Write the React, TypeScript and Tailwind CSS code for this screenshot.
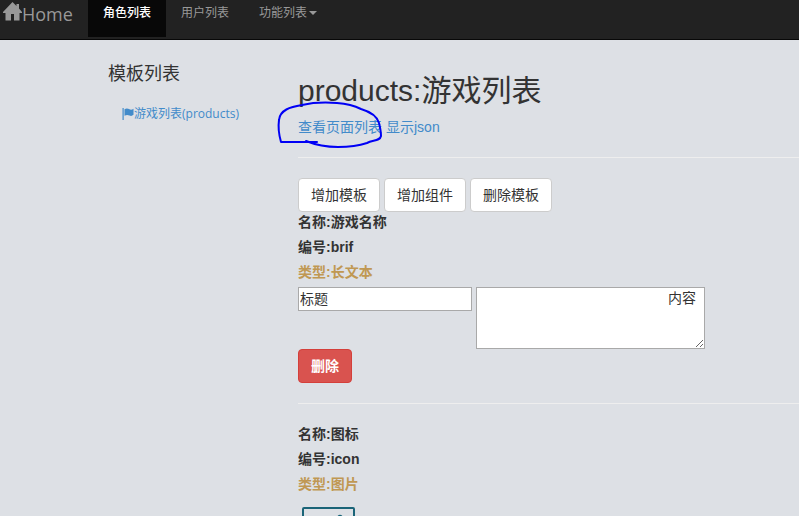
import React from "react";

const uiFont = "font-['Open_Sans','Noto_Sans_CJK_SC',sans-serif]";

function HomeIcon() {
  return (
    <svg viewBox="0 0 19 19" className="h-[19px] w-[19px] shrink-0 fill-current" aria-hidden="true">
      <path d="M9.500 0 13.500 4V2H16V6.500L19 10V11H16.500V18.500H11V12H8V18.500H2.500V11H0V10Z" />
    </svg>
  );
}

function FlagIcon() {
  return (
    <svg viewBox="0 0 12 12" className="h-3 w-3 shrink-0 fill-current" aria-hidden="true">
      <path d="M.5 0H1.700V12H.5ZM2.500 1.300C4.500 0 6 .6 7.500 1.300 9 2 10 1.600 11.500 .8V6.800C10 8 9 8.200 7.500 7.500 6 6.800 4.500 6.500 2.500 7.800Z" />
    </svg>
  );
}

function FieldLabels({ name, code, type }: { name: string; code: string; type: string }) {
  return (
    <div className="flex flex-col gap-[5px] pb-[5px] font-bold">
      <p>名称:{name}</p>
      <p>编号:{code}</p>
      <p className="text-[#c09853]">类型:{type}</p>
    </div>
  );
}

function Navbar() {
  return (
    <nav className={`flex h-10 items-start border-b border-[#080808] bg-[#222] text-xs leading-5 text-[#999] ${uiFont}`}>
      <a href="#home" className="flex w-[88px] items-start pt-0.5 pl-[3px] text-lg leading-6">
        <HomeIcon />
        <span>Home</span>
      </a>
      <a href="#roles" className="h-[37px] bg-[#080808] px-[15px] pt-[3px] font-medium text-white">角色列表</a>
      <a href="#users" className="px-[15px] pt-[3px]">用户列表</a>
      <button type="button" className="flex items-center px-[15px] pt-[3px]">
        功能列表
        <span className="ml-0.5 border-x-4 border-t-4 border-x-transparent border-t-[#999]" />
      </button>
    </nav>
  );
}

export default function App() {
  return (
    <div className="h-screen overflow-hidden bg-[#dde0e5] font-['Liberation_Sans','Noto_Sans_CJK_SC',sans-serif] text-sm leading-5 text-[#333]">
      <Navbar />
      <div className="flex pl-[108px]">
        <aside className={`w-[190px] shrink-0 pt-[23px] ${uiFont}`}>
          <h2 className="text-lg leading-5">模板列表</h2>
          <a href="#products" className="mt-[21px] flex items-center pl-3.5 text-xs leading-5 text-[#428bca]">
            <FlagIcon />
            游戏列表(products)
          </a>
        </aside>
        <main className="min-w-0 flex-1 pt-[34px]">
          <h1 className="mb-2.5 text-3xl leading-[33px]">products:游戏列表</h1>
          <div className="flex gap-1 text-[#428bca]">
            <div className="relative">
              <a href="#pages">查看页面列表</a>
              <svg
                viewBox="0 0 110 54"
                className="pointer-events-none absolute -top-[19px] -left-[23px] h-[54px] w-[110px] max-w-none"
                fill="none"
                stroke="#0000f5"
                strokeWidth="2"
                strokeLinecap="round"
                strokeLinejoin="round"
                aria-hidden="true"
              >
                <path d="M42 44H6C4 37 3 29 4 22C5 12 15 9 27 7C40 4 49 4 62 5C75 6 80 8 86 11C96 14 102 18 104 25C105 29 106 34 106 38C105 43 98 42 92 45C83 48 74 49 63 49C50 49 41 47 31 43" />
              </svg>
            </div>
            <a href="#json">显示json</a>
          </div>
          <hr className="my-5 border-[#eee]" />
          <div className="flex gap-1">
            {["增加模板", "增加组件", "删除模板"].map((label) => (
              <button key={label} type="button" className="rounded border border-[#ccc] bg-white px-3 py-1.5">
                {label}
              </button>
            ))}
          </div>
          <section>
            <FieldLabels name="游戏名称" code="brif" type="长文本" />
            <div className="flex items-start gap-1">
              <input aria-label="标题" defaultValue="标题" className="h-6 w-[174px] border border-[#a9a9a9] bg-white px-px pb-0.5" />
              <textarea aria-label="内容" defaultValue="内容" className="h-[62px] w-[229px] resize border border-[#a9a9a9] bg-white pr-2 text-right" />
            </div>
            <button type="button" className="block rounded border border-[#d43f3a] bg-[#d9534f] px-3 py-1.5 font-bold text-white">
              删除
            </button>
          </section>
          <hr className="my-5 border-[#eee]" />
          <section>
            <FieldLabels name="图标" code="icon" type="图片" />
            <svg viewBox="0 0 62 60" className="h-[60px] w-[62px]" fill="none" stroke="#1a6478" strokeWidth="2" role="img" aria-label="图标">
              <rect x="5" y="9" width="51" height="46" rx="1" />
              <path d="M40 18Q42 15.500 44 18" />
            </svg>
          </section>
        </main>
      </div>
    </div>
  );
}
